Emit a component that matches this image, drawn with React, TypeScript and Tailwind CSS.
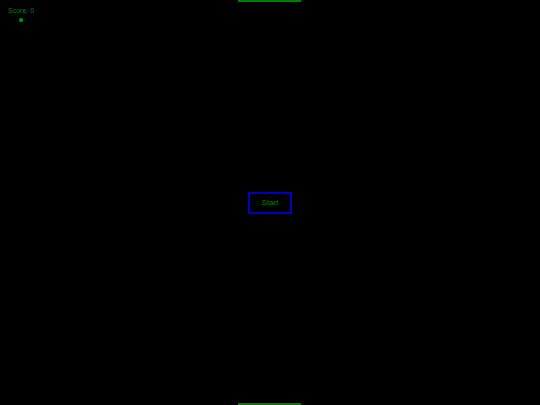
export default function App() {
  return (
    <div className="relative h-[405px] w-[540px] overflow-hidden bg-black font-['Liberation_Sans',sans-serif]">
      {/* Score */}
      <div className="absolute left-[8px] top-[7px] text-[7px] leading-[8px] text-[#008000]">Score: 0</div>

      {/* Ball */}
      <div className="absolute left-[19px] top-[18px] h-[4px] w-[4px] rounded-full bg-[#00a000]" />

      {/* Paddles */}
      <div className="absolute left-[238px] top-0 h-[2px] w-[63px] bg-[#008000]" />
      <div className="absolute bottom-0 left-[238px] h-[2px] w-[63px] bg-[#008000]" />

      {/* Start button */}
      <div className="flex h-full w-full items-center justify-center">
        <button className="flex h-[22px] w-[44px] items-center justify-center border-2 border-[#0000c0] bg-black text-[8px] text-[#008000]">
          Start
        </button>
      </div>
    </div>
  );
}
